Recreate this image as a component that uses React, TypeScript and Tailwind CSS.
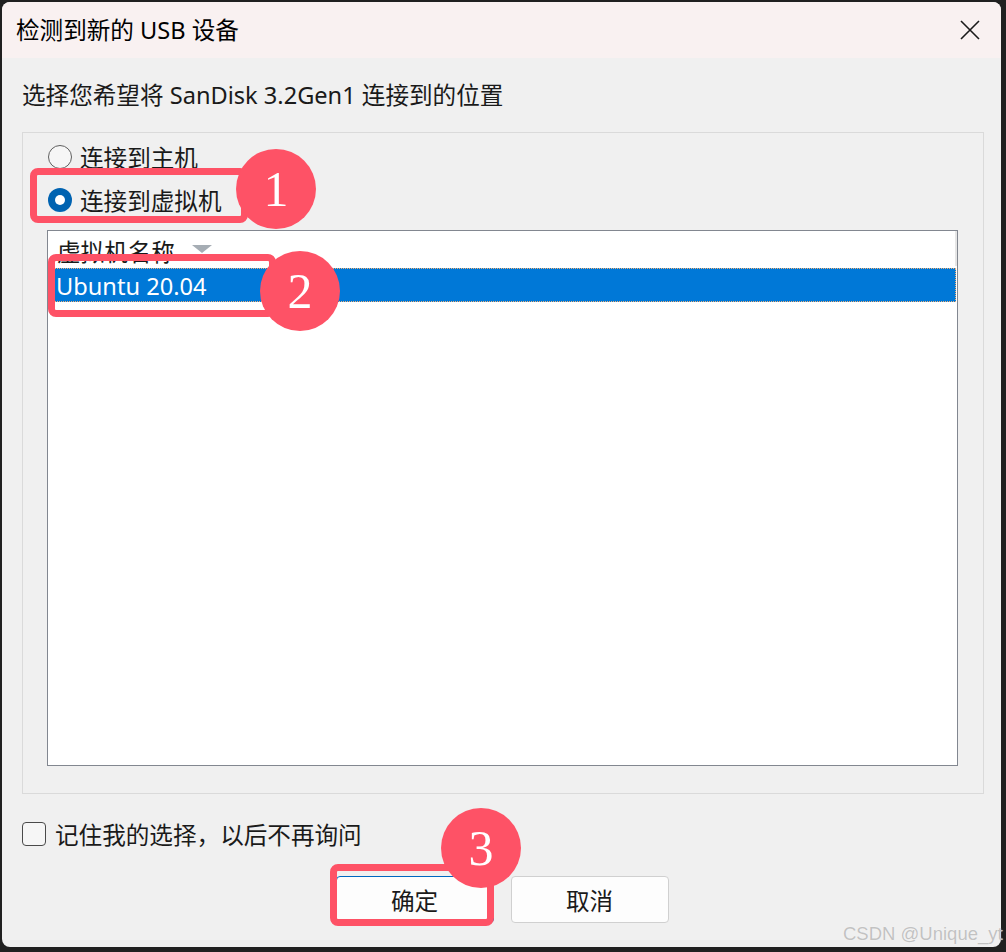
export default function App() {
  const font = "font-['Noto_Sans','Noto_Sans_CJK_SC',sans-serif]";
  return (
    <div className={`relative w-[1006px] h-[952px] overflow-hidden bg-[#202020] pt-[2px] pl-[2px] ${font} text-[#1a1a1a]`}>
      <div className="w-[999px] h-[945px] rounded-[8px] bg-[#f0f0f0] flex flex-col overflow-hidden">
        {/* Title bar */}
        <div className="h-[56px] shrink-0 bg-[#f9f1f1] flex items-center justify-between pl-[14px] pr-[21px]">
          <span className="relative top-[1px] text-[23.6px] leading-none text-black">检测到新的 USB 设备</span>
          <svg width="20" height="20" viewBox="0 0 20 20">
            <path d="M1 1L19 19M19 1L1 19" stroke="#1a1a1a" strokeWidth="1.6" />
          </svg>
        </div>

        {/* Body */}
        <div className="flex flex-col px-[20px]">
          <div className="mt-[22px] h-[30px] flex items-center text-[23.6px] leading-none">
            <span className="relative top-[1px]">选择您希望将 SanDisk 3.2Gen1 连接到的位置</span>
          </div>

          <div className="mt-[22px] w-[962px] h-[662px] border border-[#dadada] pl-[24px] pt-[4px] flex flex-col">
            <div className="ml-[1px] h-[40px] flex items-center gap-[8px]">
              <span className="w-[24px] h-[24px] rounded-full border-[1.5px] border-[#5f5f5f] bg-[#f6f6f6]" />
              <span className="relative top-[2px] text-[23.6px] leading-none">连接到主机</span>
            </div>
            <div className="ml-[1px] mt-[3px] h-[40px] flex items-center gap-[8px]">
              <span className="w-[24px] h-[24px] rounded-full bg-[#0063b1] flex items-center justify-center">
                <span className="w-[10px] h-[10px] rounded-full bg-white" />
              </span>
              <span className="relative top-[2px] text-[23.6px] leading-none">连接到虚拟机</span>
            </div>

            <div className="mt-[10px] w-[911px] h-[536px] border border-[#828790] bg-white flex flex-col">
              <div className="h-[37px] flex items-center pl-[9px] relative">
                <span className="relative top-[3px] text-[23.6px] leading-none">虚拟机名称</span>
                <svg className="ml-[17px] mt-[-2px]" width="20" height="8" viewBox="0 0 20 8">
                  <path d="M0 0H20L10 8Z" fill="#a6adb4" />
                </svg>
                <span className="absolute right-0 top-0 w-[2px] h-[35px] bg-[#e6e6e6]" />
              </div>
              <div className="h-[34px] bg-[#0078d7] border border-dotted border-[#f2b278] flex items-center pl-[7px] mr-[1px]">
                <span className="relative top-[2px] text-[23.6px] leading-none text-white">Ubuntu 20.04</span>
              </div>
            </div>
          </div>

          <div className="mt-[22px] h-[36px] flex items-center gap-[9px]">
            <span className="w-[24px] h-[24px] rounded-[4px] border-[1.5px] border-[#4a4a4a] bg-[#f6f6f6]" />
            <span className="relative top-[2px] text-[23.6px] leading-none">记住我的选择，以后不再询问</span>
          </div>

          <div className="mt-[24px] flex justify-center gap-[17px] pl-[1px]">
            <div className="w-[158px] h-[47px] rounded-[4px] border border-[#0067c0] bg-[#fdfdfd] flex items-center justify-center text-[23.6px] leading-none">
              <span className="relative top-[2px]">确定</span>
            </div>
            <div className="w-[158px] h-[47px] rounded-[4px] border border-[#d0d0d0] bg-[#fdfdfd] flex items-center justify-center text-[23.6px] leading-none">
              <span className="relative top-[2px]">取消</span>
            </div>
          </div>
        </div>
      </div>

      {/* Annotations */}
      <div className="absolute left-[30px] top-[168px] w-[218px] h-[55px] rounded-[8px] border-[7px] border-[#fe5266]" />
      <div className="absolute left-[236px] top-[149px] w-[80px] h-[80px] rounded-full bg-[#fe5266] flex items-center justify-center text-white text-[50px] leading-none font-['Liberation_Serif',serif]">
        1
      </div>

      <div className="absolute left-[48px] top-[254px] w-[228px] h-[63px] rounded-[8px] border-[7px] border-[#fe5266]" />
      <div className="absolute left-[260px] top-[251px] w-[80px] h-[80px] rounded-full bg-[#fe5266] flex items-center justify-center text-white text-[50px] leading-none font-['Liberation_Serif',serif]">
        2
      </div>

      <div className="absolute left-[330px] top-[864px] w-[164px] h-[62px] rounded-[8px] border-[7px] border-[#fe5266]" />
      <div className="absolute left-[441px] top-[808px] w-[80px] h-[80px] rounded-full bg-[#fe5266] flex items-center justify-center text-white text-[50px] leading-none font-['Liberation_Serif',serif]">
        3
      </div>

      <div className="absolute left-[843px] top-[922px] text-[18.5px] leading-[24px] whitespace-nowrap text-[#c2c2c2] font-['Liberation_Sans',sans-serif] [text-shadow:0_0_1px_#ffffff]">
        CSDN @Unique_yt
      </div>
    </div>
  );
}
